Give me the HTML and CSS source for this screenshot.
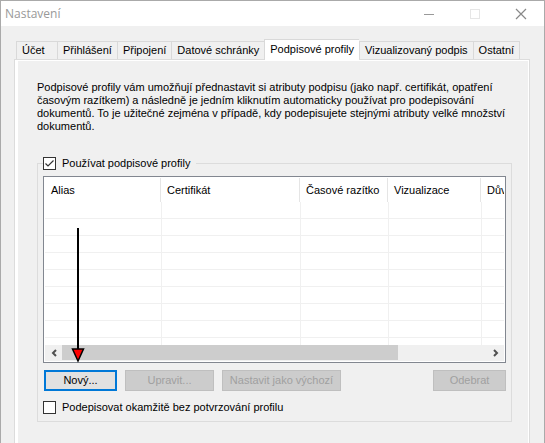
FILE: index.html
```
<!DOCTYPE html>
<html lang="cs">
<head>
    <meta charset="UTF-8">
    <meta name="viewport" content="width=device-width, initial-scale=1.0">
    <title>Nastavení</title>
    <link rel="stylesheet" href="styles.css">
</head>
<body>
    <div class="window">
        <header class="titlebar">
            <h1>Nastavení</h1>
            <div class="window-controls">
                <button type="button" aria-label="Minimalizovat">
                    <svg width="12" height="12" viewBox="0 0 12 12"><path d="M1 6.5h10" stroke="#999"/></svg>
                </button>
                <button type="button" aria-label="Maximalizovat" disabled>
                    <svg width="12" height="12" viewBox="0 0 12 12"><rect x="1.5" y="1.5" width="9" height="9" fill="none" stroke="#e6e6e6"/></svg>
                </button>
                <button type="button" aria-label="Zavřít">
                    <svg width="12" height="12" viewBox="0 0 12 12"><path d="M1 1l10 10M11 1L1 11" stroke="#888" stroke-width="1.2"/></svg>
                </button>
            </div>
        </header>

        <main>
            <div class="tabs" role="tablist">
                <button type="button" role="tab">Účet</button>
                <button type="button" role="tab">Přihlášení</button>
                <button type="button" role="tab">Připojení</button>
                <button type="button" role="tab">Datové schránky</button>
                <button type="button" role="tab" class="active" aria-selected="true">Podpisové profily</button>
                <button type="button" role="tab">Vizualizovaný podpis</button>
                <button type="button" role="tab">Ostatní</button>
            </div>

            <section class="panel" role="tabpanel">
                <p>Podpisové profily vám umožňují přednastavit si atributy podpisu (jako např. certifikát, opatření časovým razítkem) a následně je jedním kliknutím automaticky používat pro podepisování dokumentů. To je užitečné zejména v případě, kdy podepisujete stejnými atributy velké množství dokumentů.</p>

                <fieldset>
                    <legend>
                        <label class="check"><input type="checkbox" checked> Používat podpisové profily</label>
                    </legend>

                    <div class="list">
                        <div class="list-view">
                            <table>
                                <colgroup>
                                    <col class="col-alias">
                                    <col class="col-cert">
                                    <col class="col-stamp">
                                    <col class="col-visual">
                                    <col class="col-reason">
                                </colgroup>
                                <thead>
                                    <tr><th>Alias</th><th>Certifikát</th><th>Časové razítko</th><th>Vizualizace</th><th>Důvod</th></tr>
                                </thead>
                                <tbody>
                                    <tr><td></td><td></td><td></td><td></td><td></td></tr>
                                    <tr><td></td><td></td><td></td><td></td><td></td></tr>
                                    <tr><td></td><td></td><td></td><td></td><td></td></tr>
                                    <tr><td></td><td></td><td></td><td></td><td></td></tr>
                                    <tr><td></td><td></td><td></td><td></td><td></td></tr>
                                    <tr><td></td><td></td><td></td><td></td><td></td></tr>
                                    <tr><td></td><td></td><td></td><td></td><td></td></tr>
                                    <tr><td></td><td></td><td></td><td></td><td></td></tr>
                                    <tr><td></td><td></td><td></td><td></td><td></td></tr>
                                </tbody>
                            </table>
                        </div>
                        <div class="scrollbar">
                            <button type="button" aria-label="Posunout doleva">
                                <svg width="8" height="8" viewBox="0 0 8 8"><path d="M6 1L3 4l3 3" fill="none" stroke="#505050" stroke-width="2"/></svg>
                            </button>
                            <div class="track"><div class="thumb"></div></div>
                            <button type="button" aria-label="Posunout doprava">
                                <svg width="8" height="8" viewBox="0 0 8 8"><path d="M2 1l3 3-3 3" fill="none" stroke="#505050" stroke-width="2"/></svg>
                            </button>
                        </div>
                        <svg class="pointer" width="14" height="136" viewBox="0 0 14 136">
                            <path d="M7 1v121" stroke="#000" stroke-width="2"/>
                            <path d="M1.5 122h11L7 134z" fill="#f00" stroke="#000" stroke-width="1.5"/>
                        </svg>
                    </div>

                    <div class="actions">
                        <button type="button" class="default">Nový...</button>
                        <button type="button" class="medium" disabled>Upravit...</button>
                        <button type="button" class="wide" disabled>Nastavit jako výchozí</button>
                        <button type="button" class="remove" disabled>Odebrat</button>
                    </div>

                    <label class="check"><input type="checkbox"> Podepisovat okamžitě bez potvrzování profilu</label>
                </fieldset>
            </section>
        </main>
    </div>
</body>
</html>
```
FILE: styles.css
```
* {
    box-sizing: border-box;
}
body {
    margin: 0;
    font-family: "Liberation Sans", Arial, sans-serif;
    font-size: 11px;
    line-height: 13px;
    color: #000;
    background: #f0f0f0;
}
button {
    font: inherit;
    color: inherit;
    padding: 0;
    border: none;
    background: none;
}
.window {
    display: flex;
    flex-direction: column;
    min-height: 100vh;
    border: 1px solid #aaa;
    border-bottom: none;
}

/* title bar */
.titlebar {
    display: flex;
    justify-content: space-between;
    align-items: center;
    height: 25px;
    padding-left: 4px;
    background: #fff;
}
.titlebar h1 {
    margin: 0;
    font: 12px/16px "Open Sans", "Segoe UI", sans-serif;
    color: #999;
}
.window-controls {
    display: flex;
}
.window-controls button {
    display: flex;
    justify-content: center;
    align-items: center;
    width: 46px;
    height: 25px;
}

/* tabs */
main {
    display: flex;
    flex-direction: column;
    flex: 1;
    padding: 13px 14px 0 13px;
}
.tabs {
    display: flex;
    align-items: flex-end;
    height: 20px;
    padding-left: 2px;
}
.tabs button {
    height: 18px;
    min-width: 41px;
    padding: 0 5px;
    text-align: left;
    white-space: nowrap;
    border: 1px solid #d9d9d9;
    border-width: 1px 0 0 1px;
}
.tabs button:last-child {
    border-right-width: 1px;
}
.tabs .active {
    position: relative;
    height: 21px;
    margin-bottom: -1px;
    padding-bottom: 2px;
    background: #fff;
}
.panel {
    flex: 1;
    padding: 21px 15px 0 19px;
    border: 1px solid #dcdcdc;
    border-bottom: none;
    box-shadow: inset 3px 1px #fff, inset -1px 0 #fff;
}
.panel p {
    max-width: 474px;
    margin: 0 0 24px 3px;
}

/* profiles */
fieldset {
    min-width: 0;
    margin: 0 2px 0 3px;
    padding: 6px 5px 7px;
    border: 1px solid #dcdcdc;
}
legend {
    padding: 0 6px 0 0;
}
.check {
    display: flex;
    align-items: center;
    gap: 6px;
}
.check input {
    appearance: none;
    width: 13px;
    height: 13px;
    margin: 0;
    border: 1px solid #333;
    background: #fff;
}
.check input:checked {
    background: #fff url("data:image/svg+xml,%3Csvg xmlns='http://www.w3.org/2000/svg' viewBox='0 0 11 11'%3E%3Cpath d='M1.5 5.5l2.5 2.5 5.5-5.5' fill='none' stroke='%23333' stroke-width='1.2'/%3E%3C/svg%3E");
}
.list {
    position: relative;
    padding: 1px;
    border: 1px solid #828790;
    background: #fff;
}
.list-view {
    height: 167px;
    overflow: hidden;
}
table {
    width: 580px;
    table-layout: fixed;
    border-collapse: separate;
    border-spacing: 0;
}
.col-alias {
    width: 117px;
}
.col-cert {
    width: 139px;
}
.col-stamp {
    width: 88px;
}
.col-visual {
    width: 93px;
}
th {
    position: relative;
    height: 24px;
    padding: 0 0 0 5px;
    font-weight: normal;
    text-align: left;
    white-space: nowrap;
}
th:first-child {
    padding-left: 6px;
}
th::after {
    content: "";
    position: absolute;
    top: 0;
    right: 1px;
    bottom: 0;
    border-right: 1px solid #e5e5e5;
}
td {
    height: 17px;
    padding: 0;
    border: 1px solid #f0f0f0;
    border-width: 0 1px 1px 0;
}
.scrollbar {
    display: flex;
    height: 16px;
    background: #f0f0f0;
}
.scrollbar button {
    display: flex;
    justify-content: center;
    align-items: center;
    width: 17px;
}
.track {
    flex: 1;
}
.thumb {
    width: 79%;
    height: 15px;
    background: #cdcdcd;
}
.pointer {
    position: absolute;
    left: 27px;
    bottom: -1px;
}

/* buttons */
.actions {
    display: flex;
    gap: 8px;
    margin: 7px 0 10px 1px;
}
.actions button {
    width: 73px;
    height: 21px;
    white-space: nowrap;
    border: 1px solid #adadad;
    background: #e1e1e1;
}
.actions .default {
    border: 2px solid #0078d7;
}
.actions button:disabled {
    color: #a0a0a0;
    border-color: #bfbfbf;
    background: #ccc;
}
.actions .medium {
    width: 89px;
}
.actions .wide {
    width: 119px;
}
.actions .remove {
    margin-left: auto;
}
```
